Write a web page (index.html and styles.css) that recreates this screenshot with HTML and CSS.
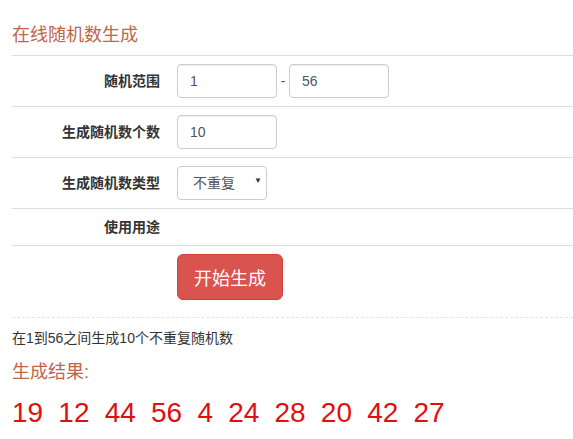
FILE: index.html
```html
<!DOCTYPE html>
<html lang="zh-CN">
<head>
<meta charset="utf-8">
<title>在线随机数生成</title>
<link rel="stylesheet" href="styles.css">
</head>
<body>
<div class="page">
  <h3 class="title">在线随机数生成</h3>
  <div class="form">
    <div class="row">
      <label class="label">随机范围</label>
      <div class="field">
        <input class="input" type="text" value="1">
        <span class="dash">-</span>
        <input class="input" type="text" value="56">
      </div>
    </div>
    <div class="row">
      <label class="label">生成随机数个数</label>
      <div class="field">
        <input class="input" type="text" value="10">
      </div>
    </div>
    <div class="row">
      <label class="label">生成随机数类型</label>
      <div class="field">
        <div class="select-wrap">
          <select class="select"><option>不重复</option><option>可重复</option></select>
          <span class="arrow">▼</span>
        </div>
      </div>
    </div>
    <div class="row row-text">
      <label class="label">使用用途</label>
      <div class="field"></div>
    </div>
    <div class="row row-btn">
      <div class="label"></div>
      <div class="field">
        <button class="btn" type="button">开始生成</button>
      </div>
    </div>
  </div>
  <p class="desc">在1到56之间生成10个不重复随机数</p>
  <h3 class="result-title">生成结果:</h3>
  <div class="numbers">
    <span class="num">19</span><span class="num">12</span><span class="num">44</span><span class="num">56</span><span class="num">4</span><span class="num">24</span><span class="num">28</span><span class="num">20</span><span class="num">42</span><span class="num">27</span>
  </div>
</div>
</body>
</html>
```

FILE: styles.css
```css
* { box-sizing: border-box; }
html, body { margin: 0; padding: 0; background: #fff; }
body {
  font-family: "Liberation Sans", "Noto Sans CJK SC", sans-serif;
  font-size: 14px;
  color: #333;
}
.page { padding-left: 12px; }
.title {
  margin: 0;
  padding-top: 24px;
  height: 55px;
  font-size: 18px;
  line-height: 22px;
  font-weight: normal;
  color: #c0654a;
}
.form { display: flex; flex-direction: column; }
.row {
  display: grid;
  grid-template-columns: 148px 1fr;
  column-gap: 17px;
  align-items: center;
  border-top: 1px solid #ddd;
  padding: 8px 0;
}
.label {
  text-align: right;
  font-weight: bold;
  font-size: 14px;
  line-height: 20px;
}
.field { display: flex; align-items: center; }
.input {
  width: 100px;
  height: 34px;
  border: 1px solid #ccc;
  border-radius: 4px;
  padding: 0 12px;
  font-family: inherit;
  font-size: 14px;
  color: #555;
  box-shadow: inset 0 1px 1px rgba(0,0,0,.075);
}
.dash { width: 12px; text-align: center; color: #555; }
.select-wrap { position: relative; width: 90px; height: 34px; }
.select {
  appearance: none;
  -webkit-appearance: none;
  width: 90px;
  height: 34px;
  border: 1px solid #ccc;
  border-radius: 4px;
  padding: 0 12px 0 15px;
  background: #fff;
  font-family: inherit;
  font-size: 14px;
  color: #555;
}
.arrow {
  position: absolute;
  right: 5px;
  top: 10px;
  font-size: 8px;
  color: #333;
  pointer-events: none;
}
.row-text { padding: 8px 0; }
.row-btn { padding: 8px 0 17px; border-bottom: 1px dashed #e5e5e5; }
.btn {
  height: 46px;
  padding: 0 16px;
  background: #d9534f;
  border: 1px solid #d43f3a;
  border-radius: 6px;
  color: #fff;
  font-family: inherit;
  font-size: 18px;
}
.desc {
  margin: 10px 0 0;
  line-height: 20px;
  font-size: 14px;
  color: #333;
}
.result-title {
  margin: 12px 0 0;
  font-size: 18px;
  line-height: 24px;
  font-weight: normal;
  color: #c0654a;
}
.numbers {
  margin-top: 9px;
  line-height: 40px;
  font-size: 28px;
  color: #e01010;
}
.num { margin-right: 15.2px; }
```
